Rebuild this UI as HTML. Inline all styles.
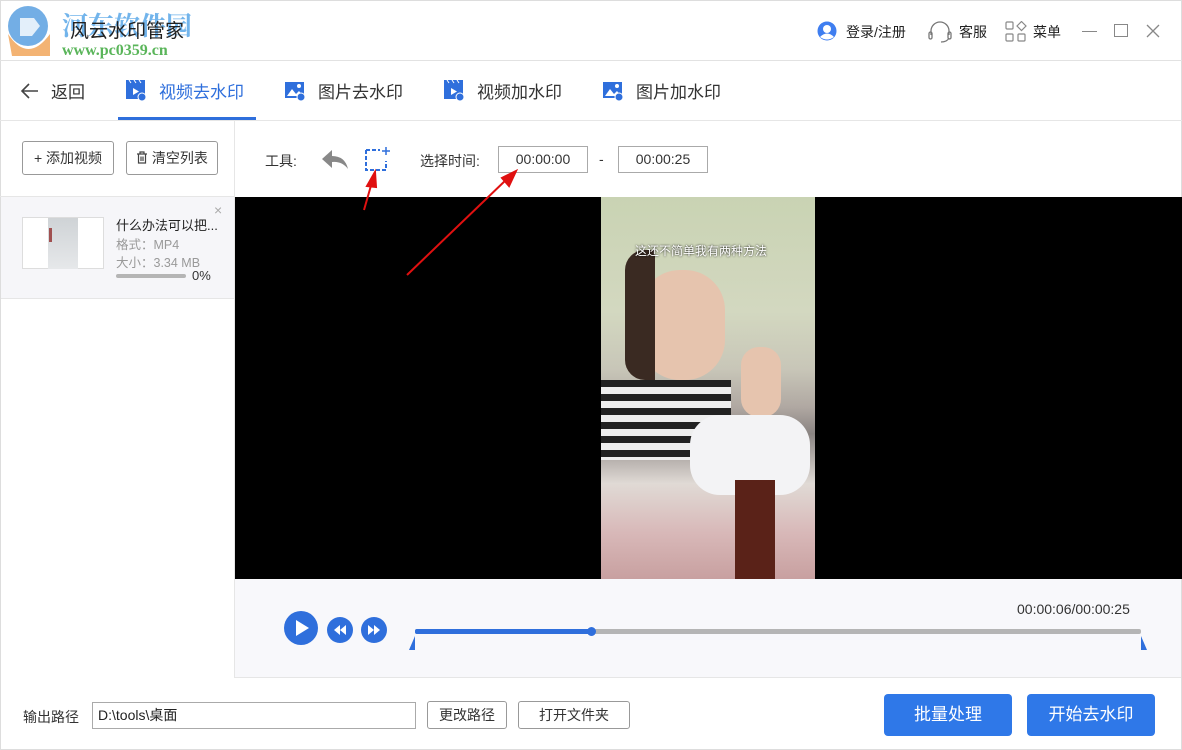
<!DOCTYPE html>
<html><head><meta charset="utf-8"><style>
*{margin:0;padding:0;box-sizing:border-box}
body{width:1182px;height:750px;overflow:hidden;background:#fff;font-family:"Liberation Sans","Noto Sans CJK SC",sans-serif;color:#333;position:relative}
.a{position:absolute}
.btn{position:absolute;border:1px solid #999;border-radius:3px;background:#fff;font-size:14px;color:#333;text-align:center}
.tab{position:absolute;top:78px;font-size:17px;color:#333}
</style></head><body>
<div class="a" style="left:0;top:0;width:1182px;height:750px;border:1px solid #ddd"></div>
<div class="a" style="left:0;top:60px;width:1182px;height:1px;background:#e2e2e2"></div>
<svg class="a" style="left:2px;top:4px" width="56" height="58"><circle cx="26" cy="22" r="20" fill="#5aa0e0" opacity=".85"/><path d="M6 30 Q26 60 48 30 L48 52 L10 52Z" fill="#f0a050" opacity=".8"/><path d="M18 14 L32 14 L38 22 L30 32 L18 32Z" fill="#fff" opacity=".8"/></svg>
<div class="a" style="left:62px;top:6px;font-size:26px;font-weight:bold;color:#5aa8e8;opacity:.85;font-family:'Noto Serif CJK SC',serif">河东软件园</div>
<div class="a" style="left:70px;top:16px;font-size:19px;color:#222">风云水印管家</div>
<div class="a" style="left:62px;top:42px;font-size:16px;font-weight:bold;color:#5ab55a;font-family:'Liberation Serif',serif">www.pc0359.cn</div>
<svg class="a" style="left:817px;top:21px" width="20" height="20"><circle cx="10" cy="10" r="9.5" fill="#3f7ef0"/><circle cx="10" cy="8" r="4" fill="#fff"/><path d="M3 16 Q10 9 17 16 Q10 21 3 16Z" fill="#fff"/></svg>
<div class="a" style="left:846px;top:22px;font-size:14px;color:#222">登录/注册</div>
<svg class="a" style="left:927px;top:21px" width="26" height="22" fill="none" stroke="#777" stroke-width="1.3"><path d="M4 14 V10 A9 9 0 0 1 22 10 V14"/><rect x="2" y="11" width="3" height="7" rx="1.5"/><rect x="21" y="11" width="3" height="7" rx="1.5"/><path d="M22 17 Q20 21 14 21"/></svg>
<div class="a" style="left:959px;top:22px;font-size:14px;color:#222">客服</div>
<svg class="a" style="left:1005px;top:21px" width="22" height="22" fill="none" stroke="#888" stroke-width="1.2"><rect x="1" y="1" width="7" height="7" rx="1"/><rect x="1" y="13" width="7" height="7" rx="1"/><rect x="13" y="13" width="7" height="7" rx="1"/><path d="M16.5 0.5 L21 5 L16.5 9.5 L12 5Z"/></svg>
<div class="a" style="left:1033px;top:22px;font-size:14px;color:#222">菜单</div>
<div class="a" style="left:1082px;top:31px;width:15px;height:1px;background:#888"></div>
<div class="a" style="left:1114px;top:24px;width:14px;height:13px;border:1px solid #888"></div>
<svg class="a" style="left:1146px;top:24px" width="14" height="14" stroke="#888" stroke-width="1.3"><path d="M1 1L13 13M13 1L1 13"/></svg>
<div class="a" style="left:0;top:120px;width:1182px;height:1px;background:#e6e6e6"></div>
<svg class="a" style="left:20px;top:82px" width="20" height="18" stroke="#444" stroke-width="1.6" fill="none"><path d="M18 9H2M9 2L2 9L9 16"/></svg>
<div class="tab" style="left:51px">返回</div>
<svg class="a" style="left:125px;top:79px" width="22" height="22"><rect x="1" y="4" width="19" height="16" fill="#2f6fdc"/><path d="M1 1h19v3H1z" fill="#2f6fdc"/><path d="M4 1l2 3M9 1l2 3M14 1l2 3" stroke="#fff"/><path d="M8 9v7l6-3.5z" fill="#fff"/><circle cx="17" cy="18" r="4" fill="#2f6fdc" stroke="#fff"/></svg>
<div class="tab" style="left:159px;color:#2f6fdc">视频去水印</div>
<div class="a" style="left:118px;top:117px;width:138px;height:3px;background:#2f6fdc"></div>
<svg class="a" style="left:284px;top:79px" width="22" height="22"><rect x="1" y="3" width="19" height="16" fill="#2f6fdc"/><path d="M3 17l5-7 4 5 3-3 4 5z" fill="#fff"/><circle cx="15" cy="7" r="2" fill="#fff"/><circle cx="17" cy="18" r="4" fill="#2f6fdc" stroke="#fff"/></svg>
<div class="tab" style="left:318px">图片去水印</div>
<svg class="a" style="left:443px;top:79px" width="22" height="22"><rect x="1" y="4" width="19" height="16" fill="#2f6fdc"/><path d="M1 1h19v3H1z" fill="#2f6fdc"/><path d="M4 1l2 3M9 1l2 3M14 1l2 3" stroke="#fff"/><path d="M8 9v7l6-3.5z" fill="#fff"/><circle cx="17" cy="18" r="4" fill="#2f6fdc" stroke="#fff"/></svg>
<div class="tab" style="left:477px">视频加水印</div>
<svg class="a" style="left:602px;top:79px" width="22" height="22"><rect x="1" y="3" width="19" height="16" fill="#2f6fdc"/><path d="M3 17l5-7 4 5 3-3 4 5z" fill="#fff"/><circle cx="15" cy="7" r="2" fill="#fff"/><circle cx="17" cy="18" r="4" fill="#2f6fdc" stroke="#fff"/></svg>
<div class="tab" style="left:636px">图片加水印</div>
<div class="a" style="left:234px;top:121px;width:1px;height:557px;background:#e6e6e6"></div>
<div class="btn" style="left:22px;top:141px;width:92px;height:34px;line-height:32px">+ 添加视频</div>
<div class="btn" style="left:126px;top:141px;width:92px;height:34px;line-height:32px"><svg width="12" height="13" style="vertical-align:-1px" fill="none" stroke="#444" stroke-width="1.2"><path d="M1 3H11M4 3V1H8V3M2.5 3V12H9.5V3M5 5.5V10M7 5.5V10"/></svg> 清空列表</div>
<div class="a" style="left:0;top:196px;width:234px;height:1px;background:#e6e6e6"></div>
<div class="a" style="left:1px;top:197px;width:233px;height:102px;background:#f6f6f9;border-bottom:1px solid #e6e6e6"></div>
<div class="a" style="left:22px;top:217px;width:82px;height:52px;background:#fff;border:1px solid #ddd"></div>
<div class="a" style="left:48px;top:218px;width:30px;height:51px;background:linear-gradient(#cfd3d6,#e6e8ea)"></div>
<div class="a" style="left:49px;top:228px;width:3px;height:14px;background:#a05050"></div>
<div class="a" style="left:116px;top:215px;font-size:13px;color:#222">什么办法可以把...</div>
<div class="a" style="left:116px;top:234px;font-size:12.5px;color:#999">格式：MP4</div>
<div class="a" style="left:116px;top:252px;font-size:12.5px;color:#999">大小：3.34 MB</div>
<div class="a" style="left:116px;top:274px;width:70px;height:4px;border-radius:2px;background:#b5b5b5"></div>
<div class="a" style="left:192px;top:268px;font-size:13px;color:#333">0%</div>
<div class="a" style="left:214px;top:202px;font-size:14px;color:#aaa">×</div>
<div class="a" style="left:265px;top:151px;font-size:14px;color:#333">工具:</div>
<svg class="a" style="left:320px;top:148px" width="30" height="22"><path d="M12 2L2 11L12 20V14Q22 13 28 21Q25 8 12 8Z" fill="#888"/></svg>
<svg class="a" style="left:364px;top:145px" width="28" height="28" fill="none" stroke="#2f6fdc" stroke-width="2"><path d="M2 5V25H22V16M2 5H16" stroke-dasharray="4 2"/><path d="M22 2V10M18 6H26" stroke-width="1.5"/></svg>
<div class="a" style="left:420px;top:151px;font-size:14px;color:#333">选择时间:</div>
<div class="a" style="left:498px;top:146px;width:90px;height:27px;border:1px solid #aaa;font-size:14px;line-height:25px;text-align:center;color:#333">00:00:00</div>
<div class="a" style="left:599px;top:151px;font-size:14px">-</div>
<div class="a" style="left:618px;top:146px;width:90px;height:27px;border:1px solid #aaa;font-size:14px;line-height:25px;text-align:center;color:#333">00:00:25</div>
<div class="a" style="left:235px;top:197px;width:947px;height:382px;background:#000"></div>
<div class="a" style="left:601px;top:197px;width:214px;height:382px;overflow:hidden;background:linear-gradient(180deg,#c9d3b3 0%,#d3d8c0 30%,#c8c6b8 45%,#b0a8a2 55%,#8a8482 62%,#e0dad5 75%,#d8b8b8 88%,#c8a0a0 100%)">
<div class="a" style="left:39px;top:73px;width:85px;height:110px;border-radius:40px;background:#e6c4ae"></div>
<div class="a" style="left:24px;top:53px;width:30px;height:130px;border-radius:20px 0 0 20px;background:#3a2a22"></div>
<div class="a" style="left:0;top:183px;width:130px;height:80px;background:repeating-linear-gradient(180deg,#222 0 7px,#eee 7px 14px)"></div>
<div class="a" style="left:140px;top:150px;width:40px;height:70px;border-radius:18px;background:#e6c4ae"></div>
<div class="a" style="left:89px;top:218px;width:120px;height:80px;border-radius:30px;background:#f3f3f5"></div>
<div class="a" style="left:134px;top:283px;width:40px;height:99px;background:#5a2218"></div>
</div>
<div class="a" style="left:635px;top:242px;font-size:12px;color:#fff;text-shadow:0 0 2px #000">这还不简单我有两种方法</div>
<div class="a" style="left:235px;top:579px;width:946px;height:99px;background:#f8f8fb;border-bottom:1px solid #e6e6e6"></div>
<svg class="a" style="left:284px;top:611px" width="36" height="36"><circle cx="17" cy="17" r="17" fill="#2f6fdc"/><path d="M12 9V25L25 17Z" fill="#fff"/></svg>
<svg class="a" style="left:327px;top:617px" width="28" height="28"><circle cx="13" cy="13" r="13" fill="#2f6fdc"/><path d="M13 8L7 13L13 18ZM19 8L13 13L19 18Z" fill="#fff"/></svg>
<svg class="a" style="left:361px;top:617px" width="28" height="28"><circle cx="13" cy="13" r="13" fill="#2f6fdc"/><path d="M7 8L13 13L7 18ZM13 8L19 13L13 18Z" fill="#fff"/></svg>
<div class="a" style="left:1017px;top:601px;font-size:14px;color:#333">00:00:06/00:00:25</div>
<div class="a" style="left:415px;top:629px;width:726px;height:5px;border-radius:2px;background:#b5b5b5"></div>
<div class="a" style="left:415px;top:629px;width:176px;height:5px;border-radius:2px;background:#2f6fdc"></div>
<div class="a" style="left:587px;top:627px;width:9px;height:9px;border-radius:50%;background:#2f6fdc"></div>
<svg class="a" style="left:409px;top:636px" width="6" height="14"><path d="M6 0V14H0Z" fill="#2f6fdc"/></svg>
<svg class="a" style="left:1141px;top:636px" width="6" height="14"><path d="M0 0V14H6Z" fill="#2f6fdc"/></svg>
<div class="a" style="left:23px;top:707px;font-size:14px;color:#333">输出路径</div>
<div class="a" style="left:92px;top:702px;width:324px;height:27px;border:1px solid #aaa;font-size:14px;line-height:25px;padding-left:5px;color:#222">D:\tools\桌面</div>
<div class="btn" style="left:427px;top:701px;width:80px;height:28px;line-height:26px">更改路径</div>
<div class="btn" style="left:518px;top:701px;width:112px;height:28px;line-height:26px">打开文件夹</div>
<div class="a" style="left:884px;top:694px;width:128px;height:42px;border-radius:4px;background:#2f78e8;color:#fff;font-size:17px;line-height:42px;text-align:center">批量处理</div>
<div class="a" style="left:1027px;top:694px;width:128px;height:42px;border-radius:4px;background:#2f78e8;color:#fff;font-size:17px;line-height:42px;text-align:center">开始去水印</div>
<svg class="a" style="left:0;top:0" width="1182" height="750"><g stroke="#e01010" stroke-width="2" fill="#e01010"><path d="M364 210L372 182"/><path d="M375 172L367 186L376 187Z"/><path d="M407 275L508 178"/><path d="M516 171L502 178L509 186Z"/></g></svg>
</body></html>
